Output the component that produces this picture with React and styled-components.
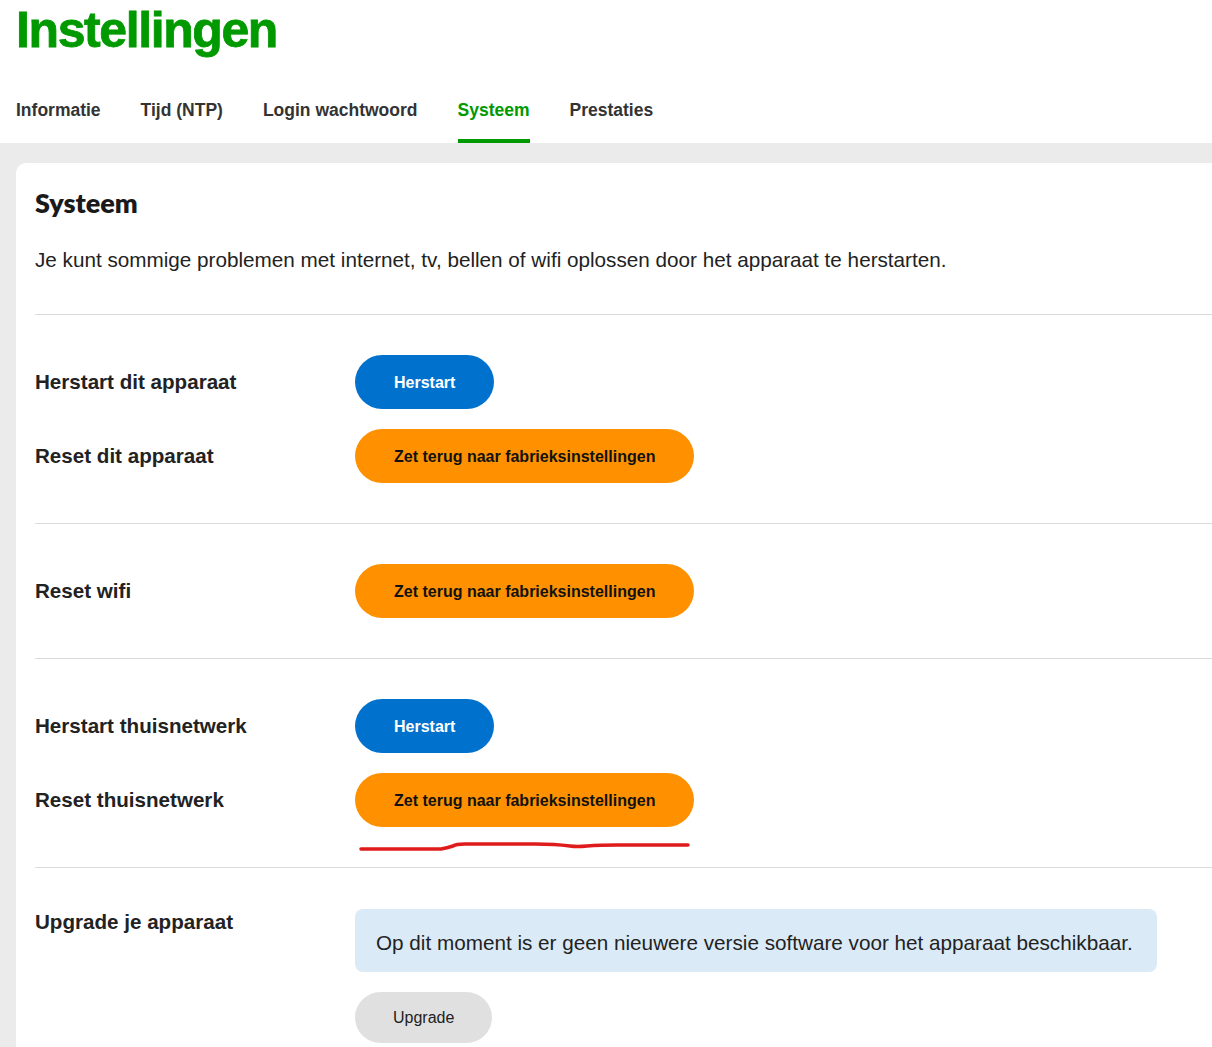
import React from "react";
import styled, { createGlobalStyle } from "styled-components";

const GlobalStyle = createGlobalStyle`
  html, body {
    margin: 0;
    padding: 0;
    background: #ffffff;
    overflow: hidden;
  }
  body {
    font-family: "Liberation Sans", Arial, sans-serif;
    color: #222222;
  }
`;

const Page = styled.div`
  display: flex;
  flex-direction: column;
  min-height: 1047px;
`;

const Header = styled.header`
  padding-left: 16px;
`;

const Titel = styled.h1`
  margin: 0;
  font-family: "Liberation Sans", Arial, sans-serif;
  font-size: 50px;
  line-height: 60px;
  font-weight: 700;
  letter-spacing: -1.4px;
  color: #009900;
  -webkit-text-stroke: 0.8px #009900;
`;

const Tabs = styled.nav`
  display: flex;
  gap: 40px;
  margin-top: 40px;
`;

const Tab = styled.div`
  font-size: 17.5px;
  line-height: 20px;
  font-weight: 700;
  padding-bottom: 19px;
  color: ${(p) => (p.$active ? "#009900" : "#333333")};
  border-bottom: 4px solid ${(p) => (p.$active ? "#009900" : "transparent")};
`;

const Grijs = styled.main`
  flex: 1;
  background: #ebebeb;
  padding: 20px 0 0 16px;
`;

const Kaart = styled.section`
  background: #ffffff;
  border-radius: 10px 0 0 0;
  margin-right: -60px;
  padding: 24px 0 40px 19px;
  min-height: 900px;
`;

const KaartTitel = styled.h2`
  margin: 0;
  font-family: Lato, "Noto Sans", sans-serif;
  font-size: 27px;
  line-height: 32px;
  font-weight: 800;
  color: #1a1a1a;
`;

const Intro = styled.p`
  margin: 27px 0 40px;
  font-size: 20.7px;
  line-height: 28px;
  color: #222222;
`;

const Blok = styled.div`
  border-top: 1px solid #dcdcdc;
  padding: 40px 0;
  display: flex;
  flex-direction: column;
  gap: 20px;
`;

const Rij = styled.div`
  display: flex;
  align-items: ${(p) => (p.$top ? "flex-start" : "center")};
`;

const Label = styled.div`
  width: 320px;
  flex-shrink: 0;
  font-size: 20.6px;
  line-height: 28px;
  font-weight: 700;
  color: #222222;
`;

const Kolom = styled.div`
  display: flex;
  flex-direction: column;
  align-items: flex-start;
  gap: 20px;
  padding-top: 1px;
`;

const Knop = styled.button`
  height: 54px;
  padding: 2px 39px 0;
  border: none;
  border-radius: 27px;
  font-family: "Liberation Sans", Arial, sans-serif;
  font-size: 16px;
  font-weight: 700;
  cursor: pointer;
  background: ${(p) => (p.$kleur === "oranje" ? "#ff9100" : "#0072ce")};
  color: ${(p) => (p.$kleur === "oranje" ? "#111111" : "#ffffff")};
`;

const KnopHouder = styled.div`
  position: relative;
`;

const Krabbel = styled.svg`
  position: absolute;
  left: 0;
  top: 54px;
  pointer-events: none;
`;

const Melding = styled.div`
  background: #dbeaf7;
  border-radius: 8px;
  padding: 20px 24px 15px 21px;
  font-size: 20.7px;
  line-height: 28px;
  color: #222222;
`;

const UpgradeKnop = styled.button`
  height: 51px;
  padding: 1px 38px 0;
  border: none;
  border-radius: 26px;
  background: #e0e0e0;
  color: #222222;
  font-family: "Liberation Sans", Arial, sans-serif;
  font-size: 16px;
  cursor: pointer;
`;

const tabs = ["Informatie", "Tijd (NTP)", "Login wachtwoord", "Systeem", "Prestaties"];

const App = () => {
  return (
    <Page>
      <GlobalStyle />
      <Header>
        <Titel>Instellingen</Titel>
        <Tabs>
          {tabs.map((t) => (
            <Tab key={t} $active={t === "Systeem"}>
              {t}
            </Tab>
          ))}
        </Tabs>
      </Header>
      <Grijs>
        <Kaart>
          <KaartTitel>Systeem</KaartTitel>
          <Intro>
            Je kunt sommige problemen met internet, tv, bellen of wifi oplossen door het apparaat te herstarten.
          </Intro>

          <Blok>
            <Rij>
              <Label>Herstart dit apparaat</Label>
              <Knop>Herstart</Knop>
            </Rij>
            <Rij>
              <Label>Reset dit apparaat</Label>
              <Knop $kleur="oranje">Zet terug naar fabrieksinstellingen</Knop>
            </Rij>
          </Blok>

          <Blok>
            <Rij>
              <Label>Reset wifi</Label>
              <Knop $kleur="oranje">Zet terug naar fabrieksinstellingen</Knop>
            </Rij>
          </Blok>

          <Blok>
            <Rij>
              <Label>Herstart thuisnetwerk</Label>
              <Knop>Herstart</Knop>
            </Rij>
            <Rij>
              <Label>Reset thuisnetwerk</Label>
              <KnopHouder>
                <Knop $kleur="oranje">Zet terug naar fabrieksinstellingen</Knop>
                {/* rode markering over de schermafbeelding */}
                <Krabbel width="345" height="30" viewBox="0 0 345 30">
                  <path
                    d="M6 22 L86 22 Q92 21 98 19 Q101 17 110 17 L180 17 Q200 17 215 19 Q222 20 232 19 Q245 18 262 18 L333 18"
                    fill="none"
                    stroke="#e01b1b"
                    strokeWidth="3.5"
                    strokeLinecap="round"
                    strokeLinejoin="round"
                  />
                </Krabbel>
              </KnopHouder>
            </Rij>
          </Blok>

          <Blok>
            <Rij $top>
              <Label>Upgrade je apparaat</Label>
              <Kolom>
                <Melding>Op dit moment is er geen nieuwere versie software voor het apparaat beschikbaar.</Melding>
                <UpgradeKnop>Upgrade</UpgradeKnop>
              </Kolom>
            </Rij>
          </Blok>
        </Kaart>
      </Grijs>
    </Page>
  );
};

export default App;
